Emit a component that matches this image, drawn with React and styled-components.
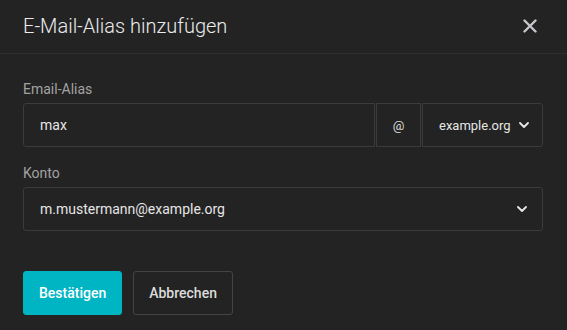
import React from "react";
import styled, { createGlobalStyle } from "styled-components";

const Global = createGlobalStyle`
  html, body { margin: 0; padding: 0; background: #232323; }
  body { font-family: Roboto, "Noto Sans", sans-serif; -webkit-font-smoothing: antialiased; }
  * { box-sizing: border-box; }
`;

const Dialog = styled.div`
  width: 567px;
  height: 330px;
  background: #232323;
  display: flex;
  flex-direction: column;
`;

const Header = styled.div`
  height: 54px;
  border-bottom: 1px solid #2f2f2f;
  display: flex;
  align-items: center;
  justify-content: space-between;
  padding: 0 24px 1px 23px;
`;

const Title = styled.h2`
  margin: 0;
  font-family: Roboto, sans-serif;
  font-weight: 300;
  font-size: 20px;
  color: #ececec;
  letter-spacing: 0;
`;

const CloseButton = styled.button`
  width: 26px;
  height: 26px;
  padding: 0;
  border: 0;
  background: transparent;
  display: flex;
  align-items: center;
  justify-content: center;
  cursor: pointer;
`;

const Body = styled.div`
  padding: 27px 24px 0 23px;
  display: flex;
  flex-direction: column;
  gap: 18px;
`;

const Field = styled.div`
  display: flex;
  flex-direction: column;
  gap: 6px;
`;

const Label = styled.label`
  font-size: 14px;
  line-height: 16px;
  color: #a2a2a2;
`;

const Row = styled.div`
  display: flex;
  gap: 1px;
  height: 44px;
`;

const Box = styled.div`
  border: 1px solid #3b3b3b;
  background: #232323;
  color: #e6e6e6;
  font-size: ${(p) => p.$size || "14px"};
  display: flex;
  align-items: center;
  height: 44px;
  white-space: nowrap;
  border-radius: ${(p) => p.$radius || "3px"};
`;

const TextInput = styled(Box)`
  flex: 1;
  padding: 0 16px;
`;

const AtBox = styled(Box)`
  width: 45px;
  justify-content: center;
  color: #dcdcdc;
`;

const Select = styled(Box)`
  width: ${(p) => (p.$full ? "auto" : "121px")};
  flex: ${(p) => (p.$full ? "1" : "none")};
  padding: 0 15px 0 16px;
  justify-content: space-between;
  gap: 8px;
  svg { flex-shrink: 0; }
`;

const Footer = styled.div`
  display: flex;
  gap: 11px;
  padding: 40px 23px 0;
`;

const Button = styled.button`
  height: 44px;
  padding: 0 15px;
  border-radius: 3px;
  font-family: Roboto, sans-serif;
  font-weight: 500;
  font-size: 14px;
  cursor: pointer;
  background: ${(p) => (p.$primary ? "#00b5c3" : "transparent")};
  color: ${(p) => (p.$primary ? "#ffffff" : "#dcdcdc")};
  border: 1px solid ${(p) => (p.$primary ? "#00b5c3" : "#444444")};
`;

const Chevron = () => (
  <svg width="10" height="6" viewBox="0 0 10 6" fill="none">
    <path d="M1 1l4 4 4-4" stroke="#e8e8e8" strokeWidth="1.8" strokeLinecap="round" strokeLinejoin="round" />
  </svg>
);

const CloseIcon = () => (
  <svg width="14" height="14" viewBox="0 0 14 14" fill="none">
    <path d="M1.5 1.5l11 11M12.5 1.5l-11 11" stroke="#c6c6cc" strokeWidth="2.4" strokeLinecap="round" />
  </svg>
);

export default function App() {
  return (
    <>
      <Global />
      <Dialog>
        <Header>
          <Title>E-Mail-Alias hinzufügen</Title>
          <CloseButton aria-label="Schließen">
            <CloseIcon />
          </CloseButton>
        </Header>
        <Body>
          <Field>
            <Label>Email-Alias</Label>
            <Row>
              <TextInput $radius="3px 0 0 3px">max</TextInput>
              <AtBox $radius="0" $size="13px">@</AtBox>
              <Select $radius="0 3px 3px 0" $size="13px">
                <span>example.org</span>
                <Chevron />
              </Select>
            </Row>
          </Field>
          <Field>
            <Label>Konto</Label>
            <Row>
              <Select $full>
                <span>m.mustermann@example.org</span>
                <Chevron />
              </Select>
            </Row>
          </Field>
        </Body>
        <Footer>
          <Button $primary>Bestätigen</Button>
          <Button>Abbrechen</Button>
        </Footer>
      </Dialog>
    </>
  );
}
